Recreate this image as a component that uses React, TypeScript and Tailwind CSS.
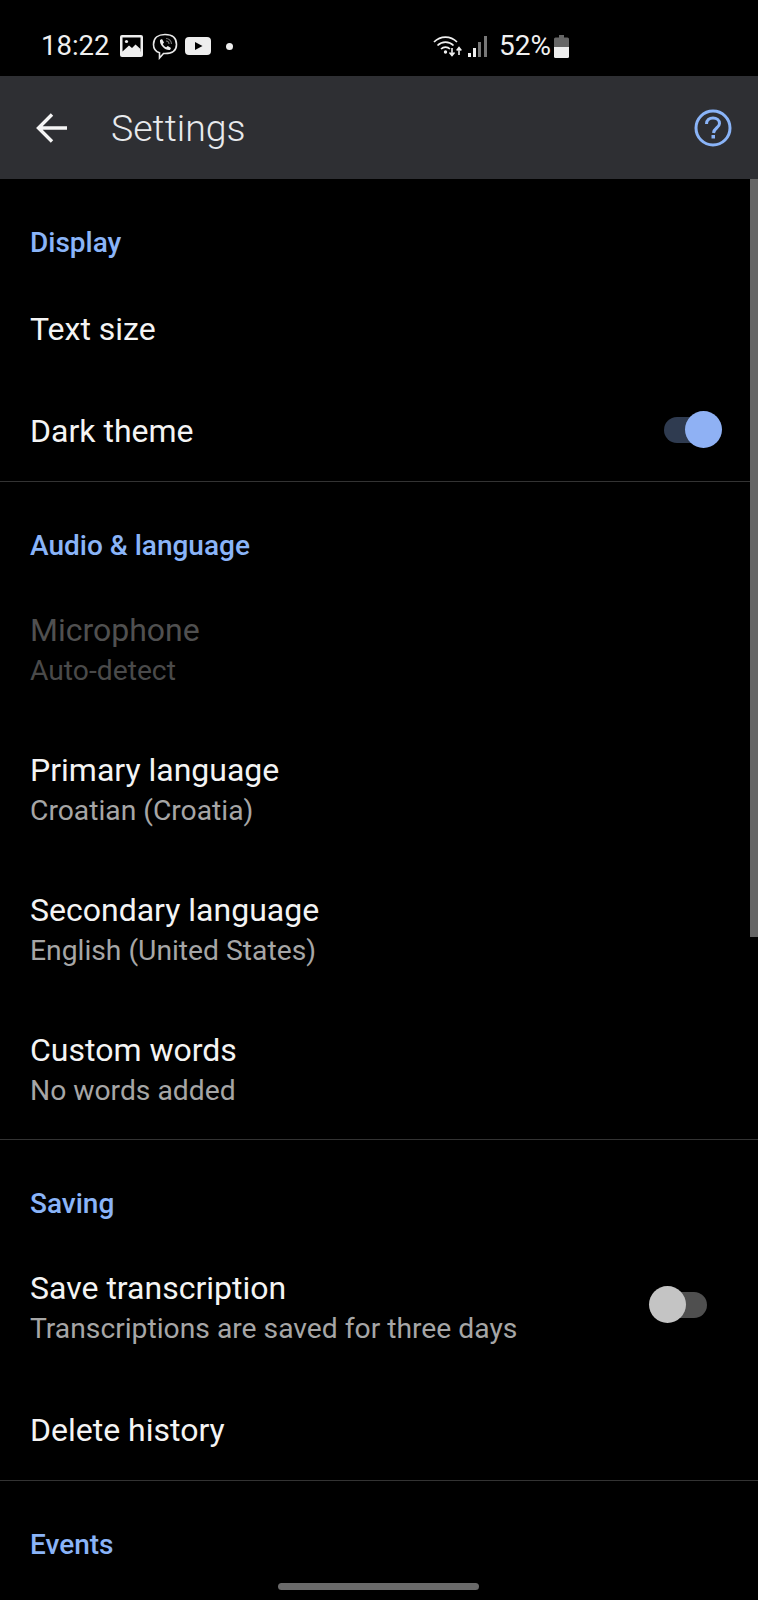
const font = "font-['Roboto',sans-serif]";

function SectionLabel({ children }: { children: string }) {
  return (
    <div className="h-[98px] pl-[30px] pt-[46px] text-[28px] leading-[36px] font-medium text-[#8ab4f8]">
      {children}
    </div>
  );
}

function Row({
  title,
  sub,
  disabled,
  height,
  children,
}: {
  title: string;
  sub?: string;
  disabled?: boolean;
  height?: string;
  children?: React.ReactNode;
}) {
  return (
    <div className={`flex items-center justify-between pl-[30px] ${height ?? (sub ? "h-[140px]" : "h-[102px]")}`}>
      <div className="pt-[2px]">
        <div className={`text-[32px] leading-[40px] ${disabled ? "text-[#505050]" : "text-[#f4f4f4]"}`}>{title}</div>
        {sub && (
          <div className={`text-[28.25px] leading-[42px] ${disabled ? "text-[#4a4a4a]" : "text-[#a6a6a6]"}`}>{sub}</div>
        )}
      </div>
      {children}
    </div>
  );
}

function Divider() {
  return <div className="h-[1px] bg-[#333333]" />;
}

function Toggle({ on }: { on: boolean }) {
  if (on) {
    return (
      <div className="relative mr-[41px] h-[26px] w-[53px] rounded-full bg-[#2f3b50]">
        <div className="absolute right-[-5px] top-[-6px] h-[37px] w-[37px] rounded-full bg-[#8fb1f4]" />
      </div>
    );
  }
  return (
    <div className="relative mr-[51px] mb-[6px] h-[26px] w-[45px] rounded-full bg-[#4f4f4f]">
      <div className="absolute left-[-13px] top-[-6px] h-[37px] w-[37px] rounded-full bg-[#c4c4c4]" />
    </div>
  );
}

function StatusLeftIcons() {
  return (
    <div className="flex items-center">
      <svg width="23" height="22" viewBox="0 0 23 22" className="ml-[11px]">
        <rect width="23" height="22" rx="2" fill="#eeeeee" />
        <rect x="2.5" y="2.5" width="18" height="14" fill="#000" />
        <circle cx="6.5" cy="6.5" r="1.6" fill="#eee" />
        <path d="M2.5 16.5 L9 10.5 L12 13 L15.5 9.5 L20.5 14 V17 H2.5 Z" fill="#eee" />
      </svg>
      <svg width="26" height="27" viewBox="0 0 26 27" className="ml-[9px]" fill="none">
        <path
          d="M13 1.5 C19.5 1.5 24.5 4.5 24.5 11.5 C24.5 18 20 20.5 13 20.5 L11.5 20.5 L7.5 25 L7.5 19.8 C3.5 18.5 1.5 15.8 1.5 11.5 C1.5 4.5 6.5 1.5 13 1.5 Z"
          stroke="#e8e8e8"
          strokeWidth="1.6"
        />
        <path
          d="M8 7 L10 6 L12 9.5 L10.8 11 C11.5 12.5 12.6 13.6 14.2 14.3 L15.8 13 L19 15 L18 17 C14 18 7 12 8 7 Z"
          fill="#e8e8e8"
        />
        <path d="M14 5.5 A5.5 5.5 0 0 1 19.5 11 M14 8 A3 3 0 0 1 17 11" stroke="#777" strokeWidth="1.1" />
      </svg>
      <svg width="26" height="18" viewBox="0 0 26 18" className="ml-[7px]">
        <rect width="26" height="18" rx="4" fill="#eeeeee" />
        <path d="M10 5 L17.5 9 L10 13 Z" fill="#000" />
      </svg>
      <div className="ml-[15px] h-[7px] w-[7px] rounded-full bg-[#eeeeee]" />
    </div>
  );
}

function StatusRightIcons() {
  return (
    <div className="flex items-center">
      <svg width="29" height="22" viewBox="0 0 29 22" fill="none">
        <path d="M1 7 C7.5 0.5 17.5 0.5 24 7" stroke="#f0f0f0" strokeWidth="1.7" />
        <path d="M4.5 10.5 C9 6 16 6 20.5 10.5" stroke="#f0f0f0" strokeWidth="1.7" />
        <path d="M8 14 C10.5 11.5 14.5 11.5 17 14" stroke="#f0f0f0" strokeWidth="1.7" />
        <circle cx="12.5" cy="17" r="1.7" fill="#f0f0f0" />
        <path d="M19 13 V20 M16.5 17.5 L19 20.5 L21.5 17.5" stroke="#f0f0f0" strokeWidth="1.6" />
        <path d="M26 20 V13 M23.7 15.5 L26 12.5 L28.3 15.5" stroke="#f0f0f0" strokeWidth="1.6" />
      </svg>
      <svg width="19" height="21" viewBox="0 0 19 21" className="ml-[6px]">
        <rect x="0" y="17" width="3" height="4" fill="#f0f0f0" />
        <rect x="5" y="12" width="3" height="9" fill="#f0f0f0" />
        <rect x="10" y="6" width="3" height="15" fill="#777" />
        <rect x="16" y="0" width="3" height="21" fill="#777" />
      </svg>
      <span className="ml-[12px] text-[28px] leading-[34px] text-[#f0f0f0]">52%</span>
      <svg width="15" height="23" viewBox="0 0 15 23" className="ml-[3px]">
        <path d="M5 0 H10 V2.5 H13.5 A1.5 1.5 0 0 1 15 4 V12 H0 V4 A1.5 1.5 0 0 1 1.5 2.5 H5 Z" fill="#666" />
        <path d="M0 12 H15 V21.5 A1.5 1.5 0 0 1 13.5 23 H1.5 A1.5 1.5 0 0 1 0 21.5 Z" fill="#eeeeee" />
      </svg>
    </div>
  );
}

export default function App() {
  return (
    <div className={`relative h-[1600px] w-[758px] overflow-hidden bg-black ${font}`}>
      <div className="flex h-[76px] items-center justify-between pt-[16px] pl-[41px] pr-[189px]">
        <div className="flex items-center">
          <span className="text-[27.5px] leading-[34px] text-[#f0f0f0]">18:22</span>
          <StatusLeftIcons />
        </div>
        <StatusRightIcons />
      </div>

      <div className="flex h-[103px] items-center bg-[#2e2f33]">
        <svg width="32" height="30" viewBox="0 0 32 30" fill="none" className="ml-[36px]">
          <path d="M31 15 H3 M16 1.5 L2.5 15 L16 28.5" stroke="#f5f5f5" strokeWidth="3.4" />
        </svg>
        <span className="ml-[43px] text-[37.5px] leading-[44px] font-light text-[#e8eaed]">Settings</span>
        <svg width="38" height="38" viewBox="0 0 38 38" fill="none" className="ml-auto mr-[26px]">
          <circle cx="19" cy="19" r="17" stroke="#8ab4f8" strokeWidth="3" />
          <path
            d="M12.5 15 C12.5 11 15.5 9 19 9 C22.5 9 25.5 11 25.5 14.5 C25.5 18.5 20 19 19.5 24"
            stroke="#8ab4f8"
            strokeWidth="3"
          />
          <rect x="17.5" y="26" width="3.5" height="3.5" fill="#8ab4f8" />
        </svg>
      </div>

      <SectionLabel>Display</SectionLabel>
      <Row title="Text size" />
      <Row title="Dark theme">
        <Toggle on />
      </Row>
      <Divider />

      <SectionLabel>Audio & language</SectionLabel>
      <Row title="Microphone" sub="Auto-detect" disabled />
      <Row title="Primary language" sub="Croatian (Croatia)" />
      <Row title="Secondary language" sub="English (United States)" />
      <Row title="Custom words" sub="No words added" height="h-[139px]" />
      <Divider />

      <SectionLabel>Saving</SectionLabel>
      <Row title="Save transcription" sub="Transcriptions are saved for three days">
        <Toggle on={false} />
      </Row>
      <Row title="Delete history" />
      <Divider />

      <SectionLabel>Events</SectionLabel>

      {/* scrollbar and gesture pill sit over the list */}
      <div className="absolute right-0 top-[179px] h-[758px] w-[8px] bg-[#666666]" />
      <div className="absolute bottom-[10px] left-[278px] h-[7px] w-[201px] rounded-full bg-[#6a6a6a]" />
    </div>
  );
}
